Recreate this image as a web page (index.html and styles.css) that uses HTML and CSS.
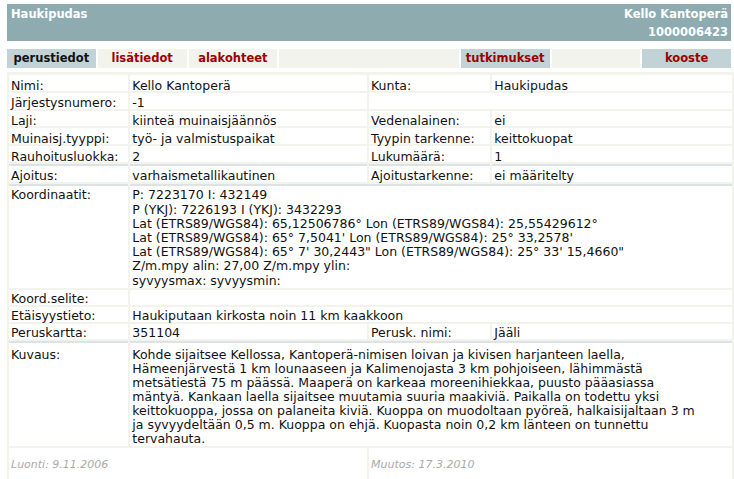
FILE: index.html
```html
<!DOCTYPE html>
<html lang="fi">
<head>
<meta charset="utf-8">
<title>Kello Kantoperä</title>
<link rel="stylesheet" href="styles.css">
</head>
<body>
<div class="page">
  <div class="header">
    <div class="title">Haukipudas</div>
    <div class="ident">
      <div>Kello Kantoperä</div>
      <div>1000006423</div>
    </div>
  </div>

  <div class="tabs">
    <div class="tab active">perustiedot</div>
    <div class="tab">lisätiedot</div>
    <div class="tab">alakohteet</div>
    <div class="tab wide"></div>
    <div class="tab alt">tutkimukset</div>
    <div class="tab"></div>
    <div class="tab alt">kooste</div>
  </div>

  <div class="panel">
    <table class="info">
      <colgroup>
        <col class="c1"><col class="c2"><col class="c3"><col class="c4">
      </colgroup>
      <tr><td>Nimi:</td><td>Kello Kantoperä</td><td>Kunta:</td><td>Haukipudas</td></tr>
      <tr><td>Järjestysnumero:</td><td>-1</td><td colspan="2"></td></tr>
      <tr><td>Laji:</td><td>kiinteä muinaisjäännös</td><td>Vedenalainen:</td><td>ei</td></tr>
      <tr><td>Muinaisj.tyyppi:</td><td>työ- ja valmistuspaikat</td><td>Tyypin tarkenne:</td><td>keittokuopat</td></tr>
      <tr><td>Rauhoitusluokka:</td><td>2</td><td>Lukumäärä:</td><td>1</td></tr>
      <tr class="sect"><td>Ajoitus:</td><td>varhaismetallikautinen</td><td>Ajoitustarkenne:</td><td>ei määritelty</td></tr>
      <tr class="sect multi"><td>Koordinaatit:</td><td colspan="3">P: 7223170 I: 432149<br>P (YKJ): 7226193 I (YKJ): 3432293<br>Lat (ETRS89/WGS84): 65,12506786° Lon (ETRS89/WGS84): 25,55429612°<br>Lat (ETRS89/WGS84): 65° 7,5041' Lon (ETRS89/WGS84): 25° 33,2578'<br>Lat (ETRS89/WGS84): 65° 7' 30,2443" Lon (ETRS89/WGS84): 25° 33' 15,4660"<br>Z/m.mpy alin: 27,00 Z/m.mpy ylin:<br>syvyysmax: syvyysmin:</td></tr>
      <tr class="tight"><td>Koord.selite:</td><td colspan="3"></td></tr>
      <tr class="tight"><td>Etäisyystieto:</td><td colspan="3">Haukiputaan kirkosta noin 11 km kaakkoon</td></tr>
      <tr class="tight"><td>Peruskartta:</td><td>351104</td><td>Perusk. nimi:</td><td>Jääli</td></tr>
      <tr class="sect desc"><td>Kuvaus:</td><td colspan="3">Kohde sijaitsee Kellossa, Kantoperä-nimisen loivan ja kivisen harjanteen laella,<br>Hämeenjärvestä 1 km lounaaseen ja Kalimenojasta 3 km pohjoiseen, lähimmästä<br>metsätiestä 75 m päässä. Maaperä on karkeaa moreenihiekkaa, puusto pääasiassa<br>mäntyä. Kankaan laella sijaitsee muutamia suuria maakiviä. Paikalla on todettu yksi<br>keittokuoppa, jossa on palaneita kiviä. Kuoppa on muodoltaan pyöreä, halkaisijaltaan 3 m<br>ja syvyydeltään 0,5 m. Kuoppa on ehjä. Kuopasta noin 0,2 km länteen on tunnettu<br>tervahauta.</td></tr>
      <tr class="foot"><td colspan="2">Luonti: 9.11.2006</td><td colspan="2">Muutos: 17.3.2010</td></tr>
    </table>
  </div>
</div>
</body>
</html>
```

FILE: styles.css
```css
html, body {
  margin: 0;
  padding: 0;
  background: #ffffff;
}

body {
  padding: 4px 0 0 7px;
  font-family: "DejaVu Sans", Verdana, sans-serif;
  color: #111111;
}

.page {
  width: 725px;
}

.header {
  display: flex;
  justify-content: space-between;
  align-items: flex-start;
  background: #8eacaf;
  height: 37px;
  box-sizing: border-box;
  padding: 1px 3px 0 4px;
  color: #ffffff;
  font-weight: bold;
  font-size: 11.5px;
  line-height: 18px;
  width: 724px;
}

.ident {
  text-align: right;
}

.tabs {
  margin-top: 8px;
  display: grid;
  grid-template-columns: repeat(8, 1fr);
  column-gap: 2px;
  width: 724px;
  height: 19px;
}

.tab {
  background: #f3f3ee;
  color: #9c0000;
  font-weight: bold;
  font-size: 11.5px;
  line-height: 19px;
  text-align: center;
}

.tab.active {
  background: #c2d3d7;
  color: #111111;
}

.tab.alt {
  background: #c2d3d7;
}

.tab.wide {
  grid-column: span 2;
}

.panel {
  margin-top: 4px;
  padding-top: 1px;
  background: #f3f3ee;
  width: 727px;
  min-height: 420px;
}

.info {
  border-collapse: separate;
  border-spacing: 2px;
  table-layout: fixed;
  width: 727px;
  font-size: 12.5px;
}

.c1 { width: 119px; }
.c2 { width: 236px; }
.c3 { width: 121px; }
.c4 { width: 239px; }

.info td {
  background: #ffffff;
  padding: 4.5px 2px 0;
  line-height: 11.25px;
  vertical-align: top;
  white-space: nowrap;
}

.info tr.sect td {
  border-top: 2px solid #dbe3e4;
}

.info tr.multi td {
  padding-top: 2.9px;
  line-height: 14.2px;
}

.info tr.tight td {
  padding-top: 3.5px;
  line-height: 11.5px;
}

.info tr.desc td {
  padding-top: 5.2px;
  line-height: 14px;
}

.info tr.foot td {
  color: #aaaaaa;
  font-style: italic;
  font-size: 11px;
  line-height: 13px;
  padding: 10px 2px 14px;
}
```
